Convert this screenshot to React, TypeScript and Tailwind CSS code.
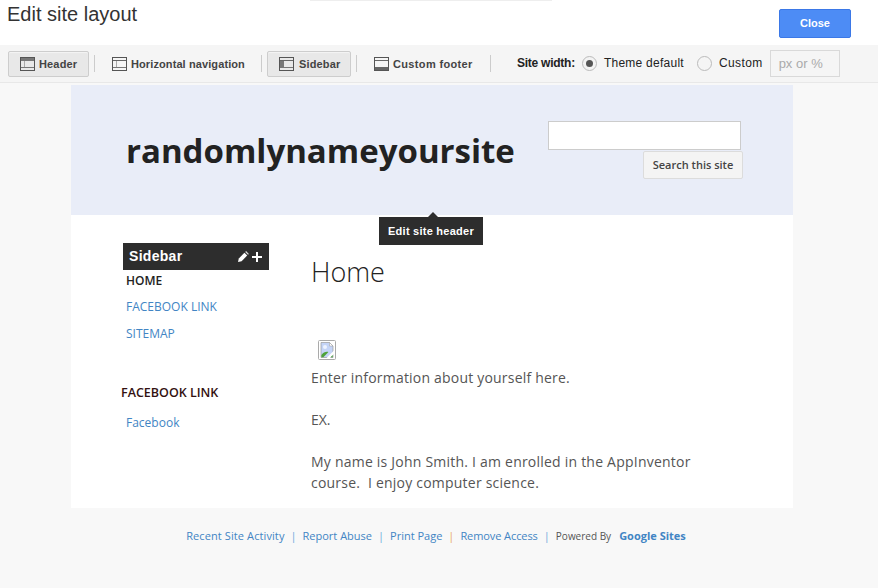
import type { ReactNode } from "react";

const ARIAL = "font-['Liberation_Sans',Arial,sans-serif]";
const OPEN = "font-['Open_Sans',sans-serif]";

// which part of the little layout glyph is filled in
function LayoutIcon({ kind }: { kind: "header" | "nav" | "sidebar" | "footer" }) {
  return (
    <svg width="15" height="14" viewBox="0 0 15 14" className="shrink-0">
      <rect x="0.5" y="0.5" width="14" height="13" fill="none" stroke="#555" />
      {kind === "header" && <rect x="1" y="1" width="13" height="3" fill="#777" />}
      {kind !== "header" && <path d="M1 3.5h13" stroke="#666" fill="none" />}
      {kind === "sidebar" && <rect x="1" y="4" width="4" height="6" fill="#777" />}
      {(kind === "header" || kind === "nav") && <path d="M4.5 4v6" stroke="#aaa" fill="none" />}
      {kind === "footer" ? (
        <rect x="1" y="10" width="13" height="3" fill="#666" />
      ) : (
        <path d="M1 10.5h13" stroke="#777" fill="none" />
      )}
    </svg>
  );
}

function ToolButton({
  kind,
  active,
  className,
  children,
}: {
  kind: "header" | "nav" | "sidebar" | "footer";
  active?: boolean;
  className: string;
  children: ReactNode;
}) {
  return (
    <div
      className={`flex h-[26px] items-center gap-[4px] rounded-[2px] border pl-[11px] text-[11px] font-bold tracking-[0.15px] text-[#444] ${
        active ? "border-[#cdcdcd] bg-[#e8e8e8] shadow-[inset_0_1px_1px_#f4f4f4]" : "border-transparent"
      } ${className}`}
    >
      <LayoutIcon kind={kind} />
      <span className="mt-[2px]">{children}</span>
    </div>
  );
}

function Divider() {
  return <div className="h-[17px] w-px shrink-0 bg-[#ccc]" />;
}

function Toolbar() {
  return (
    <div className={`flex h-[38px] items-center border-b border-[#e8e8e8] bg-[#f5f5f5] pl-2 ${ARIAL}`}>
      <ToolButton kind="header" active className="w-[81px]">
        Header
      </ToolButton>
      <div className="mx-[5px]">
        <Divider />
      </div>
      <ToolButton kind="nav" className="w-[161px]">
        <span className="tracking-[0.1px]">Horizontal navigation</span>
      </ToolButton>
      <div className="mr-[5px]">
        <Divider />
      </div>
      <ToolButton kind="sidebar" active className="w-[84px]">
        <span className="ml-[1px]">Sidebar</span>
      </ToolButton>
      <div className="mx-[5px]">
        <Divider />
      </div>
      <ToolButton kind="footer" className="w-[128px]">
        <span className="tracking-[0.35px]">Custom footer</span>
      </ToolButton>
      <Divider />
      <div className="ml-[26px] flex items-center text-[12px] text-[#222]">
        <span className="mb-[2px] font-bold tracking-[-0.25px]">Site width:</span>
        <span className="ml-[7px] flex h-[15px] w-[15px] items-center justify-center rounded-full border border-[#bbb] bg-[#f3f3f3]">
          <span className="h-[7px] w-[7px] rounded-full bg-[#555]" />
        </span>
        <span className="mb-[2px] ml-[7px] tracking-[0.25px]">Theme default</span>
        <span className="ml-[13px] h-[15px] w-[15px] rounded-full border border-[#bbb] bg-[#f5f5f5]" />
        <span className="mb-[2px] ml-[7px] tracking-[0.4px]">Custom</span>
        <div className="ml-[7px] flex h-[27px] w-[70px] items-center border border-[#d9d9d9] pl-[8px] text-[13px] text-[#aaa]">
          px or %
        </div>
      </div>
    </div>
  );
}

function SiteHeader() {
  return (
    <div className="relative flex h-[130px] bg-[#e9edf8] pl-[55px]">
      <h1 className={`mt-[43px] text-[33px] leading-[46px] font-bold text-[#222] ${OPEN}`}>randomlynameyoursite</h1>
      <div className="absolute top-[36px] left-[477px] flex w-[195px] flex-col items-end">
        <div className="h-[29px] w-[193px] self-start border border-[#ccc] bg-white" />
        <div
          className={`mt-px flex h-[28px] w-[100px] items-center justify-center rounded-[2px] border border-[#dcdcdc] bg-[#f4f4f4] text-[11px] font-semibold text-[#444] ${OPEN}`}
        >
          Search this site
        </div>
      </div>
      <div className="absolute top-[127px] left-[308px] z-10 flex flex-col items-center">
        <div className="ml-[3px] h-0 w-0 border-x-[5px] border-b-[5px] border-x-transparent border-b-[#2d2d2d]" />
        <div
          className={`flex h-[28px] w-[104px] items-center justify-center bg-[#2d2d2d] text-[11px] font-bold tracking-[0.25px] text-white ${ARIAL}`}
        >
          Edit site header
        </div>
      </div>
    </div>
  );
}

function Sidebar() {
  return (
    <div className={`w-[188px] shrink-0 pt-[28px] pl-[52px] ${OPEN}`}>
      <div className="flex h-[27px] w-[146px] items-center justify-between bg-[#2d2d2d] pr-[7px] pl-[6px] text-white">
        <span className={`text-[14px] font-bold tracking-[0.3px] ${ARIAL}`}>Sidebar</span>
        <span className="flex items-center gap-[3px]">
          <svg width="11" height="11" viewBox="0 0 11 11">
            <path d="M0 11l0.8-3.6L6.4 1.8l2.8 2.8L3.6 10.2z" fill="#fff" />
            <path d="M7.2 1l0.9-0.9 2.8 2.8-0.9 0.9z" fill="#ddd" />
          </svg>
          <svg width="10" height="10" viewBox="0 0 10 10">
            <path d="M5 0v10M0 5h10" stroke="#fff" strokeWidth="2" />
          </svg>
        </span>
      </div>
      <ul className="pl-[3px] text-[12px]">
        <li className="mt-[1px] h-[26px] leading-[20px] font-semibold text-[#222]">HOME</li>
        <li className="h-[27px] leading-[20px] text-[#4285c4]">FACEBOOK LINK</li>
        <li className="h-[27px] leading-[20px] text-[#4285c4]">SITEMAP</li>
      </ul>
      <div className="mt-[33px] -ml-[2px] text-[12.5px] leading-[18px] font-semibold text-[#311]">FACEBOOK LINK</div>
      <div className="mt-[12px] pl-[3px] text-[12px] leading-[18px] text-[#4285c4]">Facebook</div>
    </div>
  );
}

// the browser's own "image failed to load" glyph
function BrokenImage() {
  return (
    <svg width="18" height="20" viewBox="0 0 18 20" className="ml-[7px] block">
      <rect x="0.5" y="0.5" width="17" height="19" rx="1" fill="#fff" stroke="#aaa" />
      <path d="M3 2.5h8.5L15 6v11.5H3z" fill="#c4d4f7" stroke="#999" strokeWidth="0.7" />
      <path d="M11.5 2.5V6H15z" fill="#fff" stroke="#999" strokeWidth="0.5" />
      <circle cx="7" cy="7" r="2" fill="#eef3ff" />
      <path d="M3.4 17.2V15c2-2.6 4.4-3.6 7-3l-5 5.2z" fill="#4ea23a" />
      <path d="M7.5 19l9-9v3.4L11 19z" fill="#fff" />
      <path d="M12.5 17.2l2.2-2.2v2.2z" fill="#4ea23a" />
    </svg>
  );
}

function MainBody() {
  return (
    <div className={`pl-[52px] text-[14px] leading-[21px] text-[#555] ${OPEN}`}>
      <h2 className="mt-[40px] text-[27px] leading-[34px] font-light text-[#222]">Home</h2>
      <div className="mt-[51px]">
        <BrokenImage />
      </div>
      <p className="mt-[7px] tracking-[0.2px]">Enter information about yourself here.</p>
      <p className="mt-[21px]">EX.</p>
      <p className="mt-[21px] w-[400px] tracking-[0.22px]">
        My name is John Smith. I am enrolled in the AppInventor course.&nbsp; I enjoy computer science.
      </p>
    </div>
  );
}

function SiteFooter() {
  const links = [
    { label: "Recent Site Activity", text: "tracking-[0.1px]", sep: "text-[#6fa8dc]" },
    { label: "Report Abuse", text: "", sep: "text-[#6fa8dc]" },
    { label: "Print Page", text: "", sep: "text-[#e8a860]" },
    { label: "Remove Access", text: "tracking-[-0.08px]", sep: "text-[#6fa8dc]" },
  ];
  return (
    <div className={`mt-[20px] flex items-center justify-center pr-[6px] text-[11px] leading-[16px] ${OPEN}`}>
      {links.map((link) => (
        <span key={link.label} className="flex">
          <span className={`text-[#4285c4] ${link.text}`}>{link.label}</span>
          <span className={`mx-[6px] ${link.sep}`}>|</span>
        </span>
      ))}
      <span className="text-[10px] text-[#555]">Powered By</span>
      <span className="ml-[8px] font-bold text-[#4285c4]">Google Sites</span>
    </div>
  );
}

export default function App() {
  return (
    <div className="h-[588px] w-[878px] overflow-hidden bg-[#f8f8f8]">
      <div className="relative flex h-[45px] items-start justify-between bg-white">
        <div className="absolute top-0 left-[310px] h-px w-[242px] bg-[#eee]" />
        <div className={`mt-[1px] ml-[7px] text-[20px] leading-[26px] text-[#333] ${ARIAL}`}>Edit site layout</div>
        <div
          className={`mt-[9px] mr-[27px] flex h-[29px] w-[72px] items-center justify-center rounded-[2px] border border-[#3b78e7] bg-[#4d8cf5] text-[11px] font-bold text-white ${ARIAL}`}
        >
          Close
        </div>
      </div>
      <Toolbar />
      <div className="mx-[71px] mt-[2px] w-[722px] bg-white">
        <SiteHeader />
        <div className="flex h-[293px]">
          <Sidebar />
          <MainBody />
        </div>
      </div>
      <SiteFooter />
    </div>
  );
}
